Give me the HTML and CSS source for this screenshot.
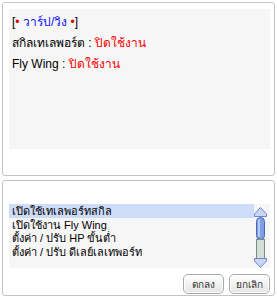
FILE: index.html
```html
<!DOCTYPE html>
<html lang="th">
<head>
    <meta charset="UTF-8">
    <title>วาร์ป/วิง</title>
    <link rel="stylesheet" href="styles.css">
</head>
<body>
    <div class="window">
        <div class="panel info">
            <div class="info-box">
                <p class="line">[<span class="dot">•</span> <span class="title">วาร์ป/วิง</span> <span class="dot">•</span>]</p>
                <p class="line">สกิลเทเลพอร์ต : <span class="off">ปิดใช้งาน</span></p>
                <p class="line">Fly Wing : <span class="off">ปิดใช้งาน</span></p>
            </div>
        </div>

        <div class="panel menu">
            <div class="list">
                <ul class="items">
                    <li class="selected">เปิดใช้เทเลพอร์ทสกิล</li>
                    <li>เปิดใช้งาน Fly Wing</li>
                    <li>ตั้งค่า / ปรับ HP ขั้นต่ำ</li>
                    <li>ตั้งค่า / ปรับ ดีเลย์เลเทพอร์ท</li>
                </ul>
                <svg class="scrollbar" width="13" height="61" viewBox="0 0 13 61">
                    <!-- up arrow -->
                    <path d="M6.5 0.5 L12.5 7 L12.5 9.5 L0.5 9.5 L0.5 7 Z" fill="#c9d6f4" stroke="#6f86c8"/>
                    <!-- thumb -->
                    <rect x="2.5" y="10.5" width="8" height="22" rx="4" fill="#7f9ee8" stroke="#4a68b8"/>
                    <rect x="4" y="12" width="2" height="18" rx="1" fill="#b8caf4"/>
                    <!-- track -->
                    <rect x="2.5" y="32.5" width="8" height="19" fill="#d5ddd8" stroke="#7f8a86"/>
                    <!-- down arrow -->
                    <path d="M0.5 51.5 L12.5 51.5 L12.5 54 L6.5 60.5 L0.5 54 Z" fill="#c9d6f4" stroke="#6f86c8"/>
                </svg>
            </div>
            <div class="buttons">
                <button class="btn">ตกลง</button>
                <button class="btn">ยกเลิก</button>
            </div>
        </div>
    </div>
</body>
</html>
```

FILE: styles.css
```css
body {
    margin: 0;
    background-color: #fff;
    font-family: "Liberation Sans", Arial, sans-serif;
    font-size: 11px;
    color: #000;
}

.window {
    width: 277px;
    height: 296px;
    padding: 2px 2px 0 2px;
    box-sizing: border-box;
}

.panel {
    width: 273px;
    border: 1px solid #c4c4c4;
    border-radius: 3px;
    box-sizing: border-box;
    background-color: #fff;
}

.info {
    height: 174px;
    padding: 6px 4px 0 6px;
}

.info-box {
    height: 140px;
    background-color: #f6f6f6;
    padding: 3px 3px;
    box-sizing: border-box;
}

.line {
    margin: 0;
    height: 21px;
    line-height: 21px;
    font-size: 12px;
    white-space: nowrap;
}

.dot {
    color: #e00000;
}

.title {
    color: #1010ff;
}

.off {
    color: #ff0000;
}

.menu {
    height: 116px;
    margin-top: 4px;
    padding: 23px 4px 0 6px;
}

.list {
    display: flex;
    height: 64px;
    background-color: #f6f6f6;
}

.items {
    flex: 1;
    list-style: none;
    margin: 0;
    padding: 0;
    overflow: hidden;
}

.items li {
    height: 13.5px;
    line-height: 14px;
    padding-left: 3px;
    white-space: nowrap;
    overflow: hidden;
}

.items li.selected {
    background-color: #cddcf8;
}

.scrollbar {
    flex: none;
    margin: 3px 3px 0 0;
}

.buttons {
    display: flex;
    justify-content: flex-end;
    gap: 5px;
    margin-top: 6px;
}

.btn {
    width: 41px;
    height: 20px;
    padding: 0;
    border: 1px solid #a9a9a9;
    border-radius: 5px;
    background: linear-gradient(#ffffff, #e4e4e4);
    box-shadow: inset 0 0 0 1px #fff;
    font-family: "Liberation Sans", Arial, sans-serif;
    font-size: 10px;
    color: #333;
}
```
